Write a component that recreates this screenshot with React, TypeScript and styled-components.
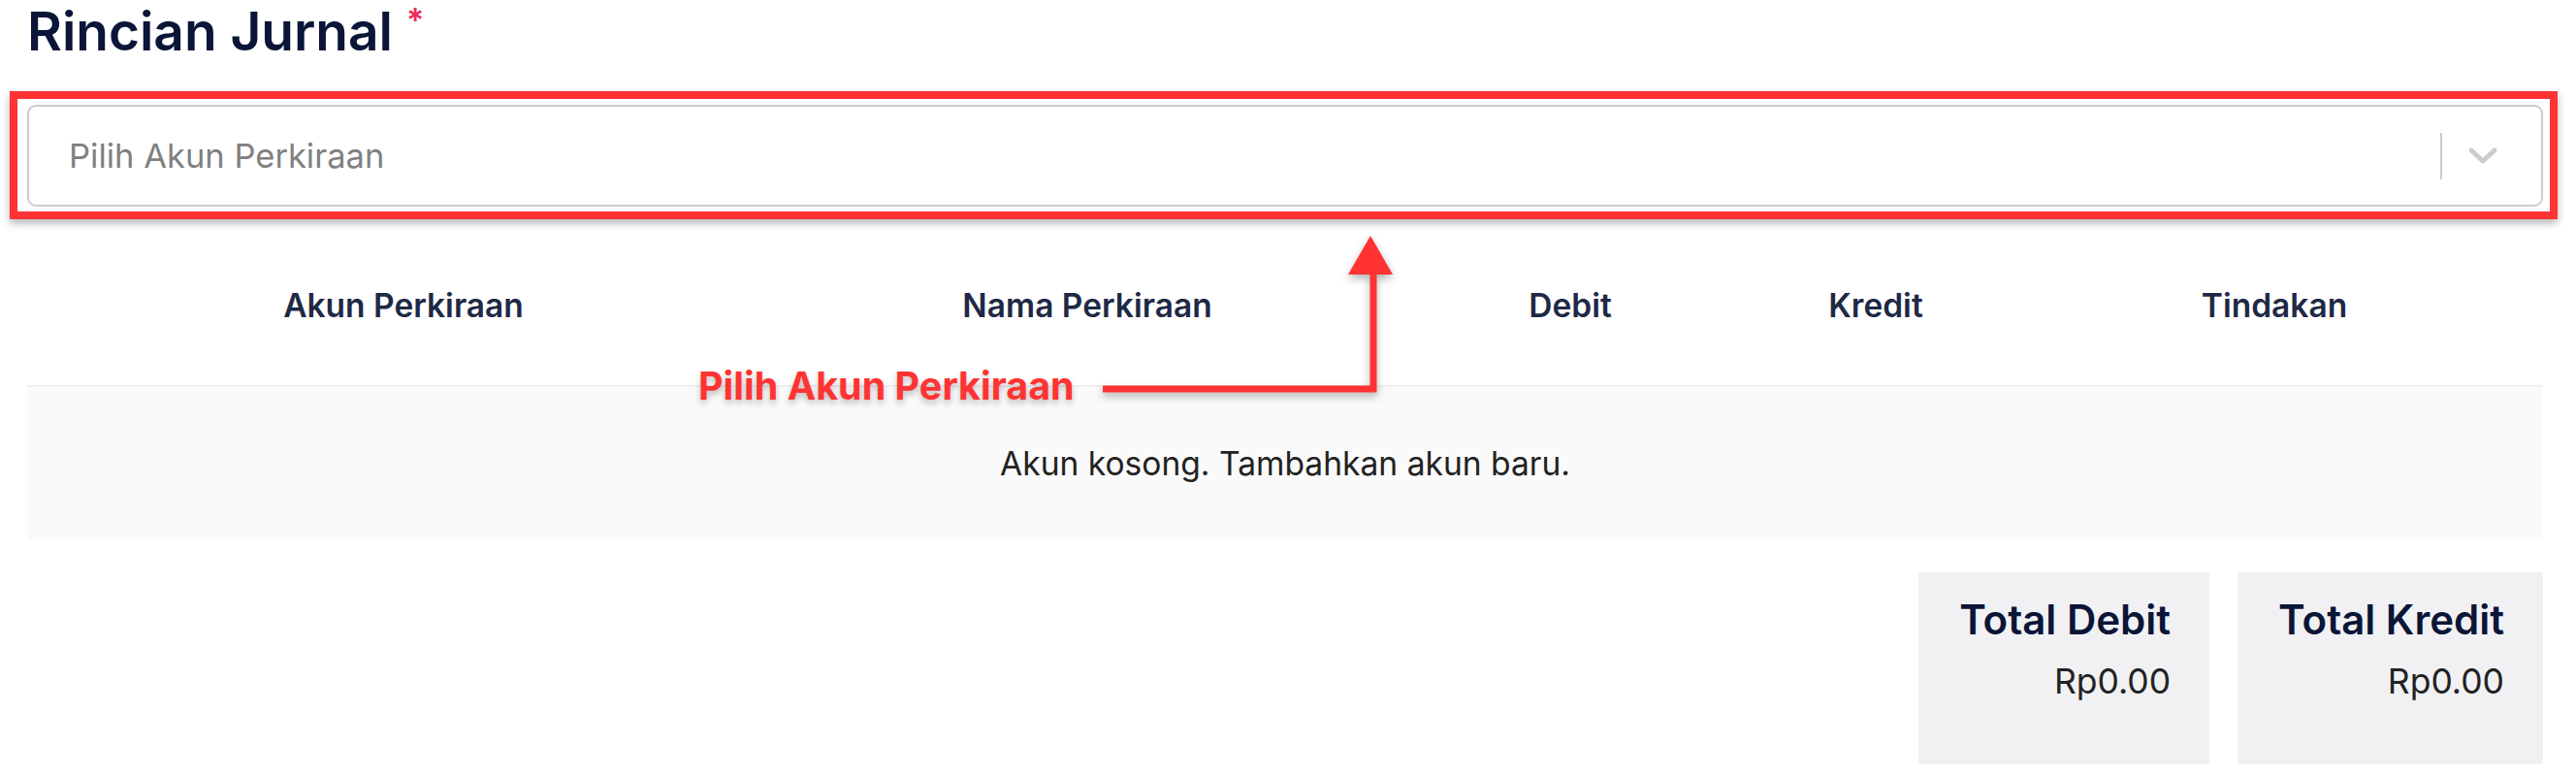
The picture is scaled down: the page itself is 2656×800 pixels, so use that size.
import React from 'react';
import styled, { createGlobalStyle } from 'styled-components';

const GlobalStyle = createGlobalStyle`
  html, body {
    margin: 0;
    padding: 0;
    background: #ffffff;
  }
  body {
    font-family: Inter, "Noto Sans", "Liberation Sans", sans-serif;
  }
`;

const Page = styled.div`
  position: relative;
  width: 2656px;
  height: 800px;
  box-sizing: border-box;
  padding: 0 34px 0 28px;
  overflow: hidden;
`;

const TitleRow = styled.div`
  display: flex;
  align-items: flex-start;
`;

const Title = styled.h1`
  margin: 0;
  font-size: 55px;
  font-weight: 600;
  line-height: 64px;
  color: #0b1537;
`;

const Required = styled.span`
  margin: 4px 0 0 14px;
  font-size: 34px;
  line-height: 1;
  font-weight: 600;
  color: #f2295b;
`;

const SelectWrap = styled.div`
  position: relative;
  margin-top: 44px;
`;

const Select = styled.div`
  display: flex;
  align-items: center;
  height: 105px;
  box-sizing: border-box;
  border: 2px solid #cccccc;
  border-radius: 9px;
  background: #fff;
`;

const Placeholder = styled.div`
  flex: 1;
  padding-left: 41px;
  font-size: 34.5px;
  color: #808080;
`;

const Separator = styled.span`
  width: 2px;
  height: 48px;
  background: #cccccc;
`;

const Indicator = styled.div`
  display: flex;
  align-items: center;
  justify-content: center;
  padding: 0 44px 0 26px;
`;

const Highlight = styled.div`
  position: absolute;
  left: -18px;
  right: -15px;
  top: -14px;
  bottom: -13px;
  border: 8px solid #ff3333;
  box-shadow: 0 4px 8px rgba(0, 0, 0, 0.3);
  pointer-events: none;
`;

const HeaderRow = styled.div`
  display: grid;
  grid-template-columns: 776px 634px 362px 268px 554px;
  align-items: center;
  height: 165px;
  margin-top: 19px;
  border-bottom: 2px solid #efeff1;
`;

const HeaderCell = styled.div`
  text-align: center;
  font-size: 33.5px;
  font-weight: 600;
  color: #1e2945;
`;

const EmptyRow = styled.div`
  display: flex;
  align-items: center;
  justify-content: center;
  height: 157px;
  background: #fafafa;
  font-size: 33.6px;
  color: #222222;
`;

const Totals = styled.div`
  display: flex;
  justify-content: flex-end;
  gap: 29px;
  margin-top: 34px;
`;

const TotalBox = styled.div`
  height: 198px;
  box-sizing: border-box;
  padding: 24px 40px 0 42px;
  background: #f1f1f4;
  text-align: right;
`;

const TotalLabel = styled.div`
  font-size: 42px;
  font-weight: 600;
  line-height: 50px;
  color: #0b1537;
`;

const TotalValue = styled.div`
  margin-top: 18px;
  font-size: 35.5px;
  line-height: 42px;
  color: #222222;
`;

const Callout = styled.div`
  position: absolute;
  left: 720px;
  top: 379px;
  font-size: 39.5px;
  line-height: 1;
  font-weight: 700;
  color: #ff3333;
  text-shadow: 0 4px 6px rgba(0, 0, 0, 0.25);
  white-space: nowrap;
`;

const Arrow = styled.svg`
  position: absolute;
  left: 1120px;
  top: 236px;
  overflow: visible;
  filter: drop-shadow(0 4px 4px rgba(0, 0, 0, 0.3));
`;

const columns = ['Akun Perkiraan', 'Nama Perkiraan', 'Debit', 'Kredit', 'Tindakan'];

const totals = [
  { label: 'Total Debit', value: 'Rp0.00' },
  { label: 'Total Kredit', value: 'Rp0.00' },
];

const App: React.FC = () => {
  return (
    <>
      <GlobalStyle />
      <Page>
        <TitleRow>
          <Title>Rincian Jurnal</Title>
          <Required>*</Required>
        </TitleRow>

        <SelectWrap>
          <Select>
            <Placeholder>Pilih Akun Perkiraan</Placeholder>
            <Separator />
            <Indicator>
              <svg width="32" height="20" viewBox="0 0 32 20">
                <path
                  d="M4 4 L16 15 L28 4"
                  fill="none"
                  stroke="#cccccc"
                  strokeWidth="5"
                  strokeLinecap="round"
                  strokeLinejoin="round"
                />
              </svg>
            </Indicator>
          </Select>
          <Highlight />
        </SelectWrap>

        <HeaderRow>
          {columns.map((c) => (
            <HeaderCell key={c}>{c}</HeaderCell>
          ))}
        </HeaderRow>
        <EmptyRow>Akun kosong. Tambahkan akun baru.</EmptyRow>

        <Totals>
          {totals.map((t) => (
            <TotalBox key={t.label}>
              <TotalLabel>{t.label}</TotalLabel>
              <TotalValue>{t.value}</TotalValue>
            </TotalBox>
          ))}
        </Totals>

        <Callout>Pilih Akun Perkiraan</Callout>
        <Arrow width="320" height="172" viewBox="0 0 320 172">
          <path d="M17 165 H296 V40" fill="none" stroke="#ff3333" strokeWidth="7" />
          <polygon points="293,7 270,47 316,47" fill="#ff3333" />
        </Arrow>
      </Page>
    </>
  );
};

export default App;
